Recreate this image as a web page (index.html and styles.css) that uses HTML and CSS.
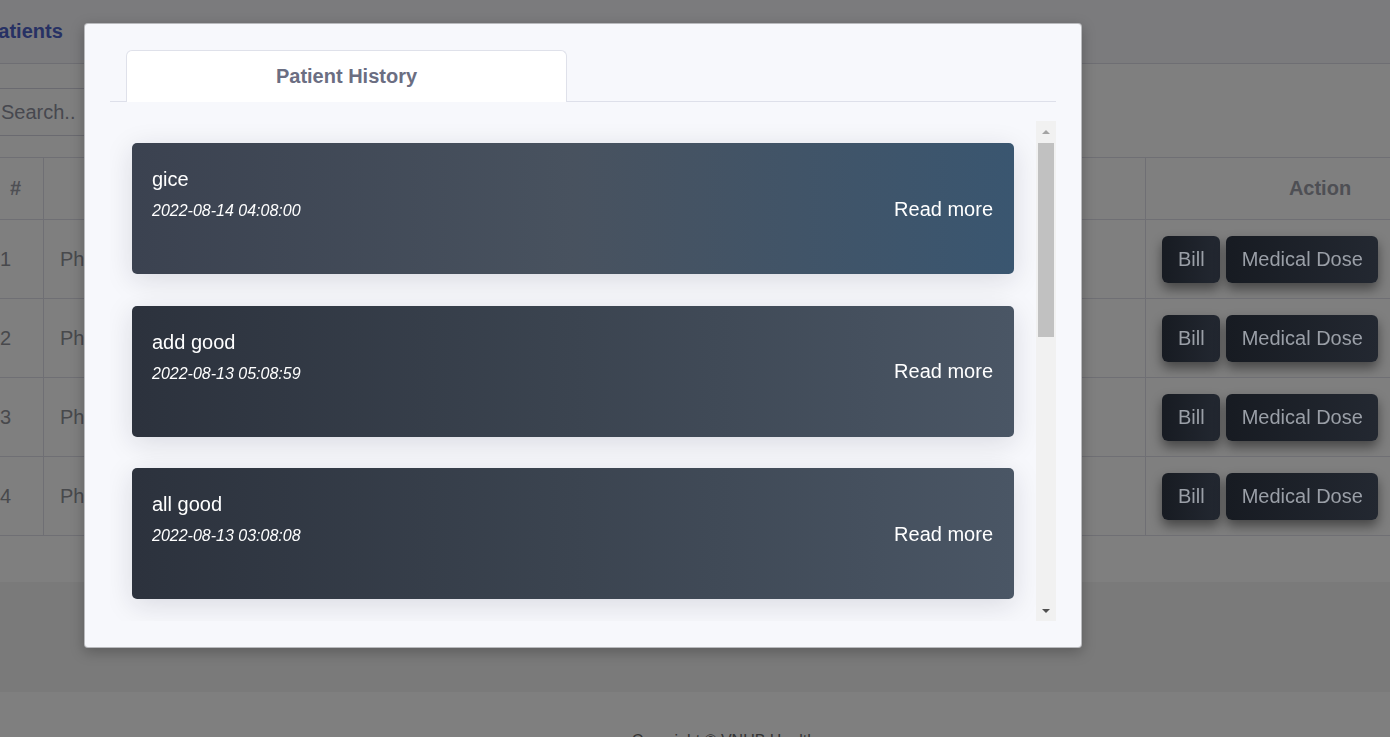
FILE: index.html
```html
<!DOCTYPE html>
<html lang="en">
<head>
<meta charset="utf-8">
<title>Patients</title>
<link rel="stylesheet" href="styles.css">
</head>
<body>
<div class="page">
  <header class="topbar"><h1 class="title">Patients</h1></header>
  <main class="content">
    <section class="panel">
      <div class="toolbar"><div class="search">Search..</div></div>
      <table class="grid">
        <thead>
          <tr><th class="c-num">#</th><th class="c-name">Name</th><th class="c-phone">Phone</th><th class="c-hist">History</th><th class="c-act">Action</th></tr>
        </thead>
        <tbody>
          <tr><td class="c-num">1</td><td>Pham Van A</td><td>0912345678</td><td class="c-hist"><span class="btn">History</span></td><td class="c-act"><span class="btn">Bill</span><span class="btn">Medical Dose</span></td></tr>
          <tr><td class="c-num">2</td><td>Pham Thi B</td><td>0987654321</td><td class="c-hist"><span class="btn">History</span></td><td class="c-act"><span class="btn">Bill</span><span class="btn">Medical Dose</span></td></tr>
          <tr><td class="c-num">3</td><td>Pham Van C</td><td>0901234567</td><td class="c-hist"><span class="btn">History</span></td><td class="c-act"><span class="btn">Bill</span><span class="btn">Medical Dose</span></td></tr>
          <tr><td class="c-num">4</td><td>Pham Thi D</td><td>0934567890</td><td class="c-hist"><span class="btn">History</span></td><td class="c-act"><span class="btn">Bill</span><span class="btn">Medical Dose</span></td></tr>
        </tbody>
      </table>
    </section>
  </main>
  <footer class="footer">Copyright © VNUB Healthcare</footer>
</div>

<div class="backdrop"></div>

<div class="modal">
  <nav class="tabs"><div class="tab">Patient History</div></nav>
  <div class="modal-body">
    <div class="list">
      <article class="entry entry-active">
        <div class="entry-text"><div class="entry-title">gice</div><div class="entry-date">2022-08-14 04:08:00</div></div>
        <div class="entry-more">Read more</div>
      </article>
      <article class="entry">
        <div class="entry-text"><div class="entry-title">add good</div><div class="entry-date">2022-08-13 05:08:59</div></div>
        <div class="entry-more">Read more</div>
      </article>
      <article class="entry">
        <div class="entry-text"><div class="entry-title">all good</div><div class="entry-date">2022-08-13 03:08:08</div></div>
        <div class="entry-more">Read more</div>
      </article>
    </div>
    <div class="scrollbar">
      <div class="sb-btn"><span class="arrow-up"></span></div>
      <div class="sb-track"><div class="sb-thumb"></div></div>
      <div class="sb-btn"><span class="arrow-down"></span></div>
    </div>
  </div>
</div>
</body>
</html>
```

FILE: styles.css
```css
html, body {
  margin: 0;
  padding: 0;
  overflow: hidden;
  height: 737px;
}
body {
  font-family: "Liberation Sans", Arial, sans-serif;
  color: #858796;
  background: #ffffff;
}
.page {
  width: 1503px;
  margin-left: -12px;
}
.topbar {
  height: 63px;
  background: #f6f6fa;
  border-bottom: 1px solid #dcdde6;
  display: flex;
  align-items: center;
}
.title {
  margin: 0 0 0 -3px;
  font-size: 20px;
  font-weight: bold;
  color: #4e63c8;
}
.content {
  background: #f4f4f5;
  padding-bottom: 110px;
}
.panel {
  background: #ffffff;
  padding-bottom: 46px;
}
.toolbar {
  padding: 24px 0 21px;
}
.search {
  width: 420px;
  height: 46px;
  border: 1px solid #d4d5e0;
  border-radius: 2px;
  box-sizing: content-box;
  padding-left: 12px;
  display: flex;
  align-items: center;
  font-size: 20px;
  color: #8e909e;
}
.grid {
  width: 1503px;
  border-collapse: collapse;
  table-layout: fixed;
  font-size: 20px;
}
.grid th, .grid td {
  border: 1px solid #dedfe8;
  border-left: none;
  border-right: 1px solid #dedfe8;
}
.grid th {
  height: 61px;
  font-weight: bold;
  color: #9c9ea9;
  text-align: center;
  padding: 0;
}
.grid td {
  height: 78px;
  padding: 0 16px;
  color: #909299;
  white-space: nowrap;
  overflow: hidden;
}
.grid .c-num { width: 55px; }
.grid td.c-num { padding-left: 12px; }
.grid .c-name { width: 500px; }
.grid .c-phone { width: 300px; }
.grid .c-hist { width: 299px; }
.grid td.c-hist { text-align: right; padding-right: 67px; }
.grid .c-act { width: 348px; }
.grid td.c-act { padding-left: 16px; }
.btn {
  position: relative;
  z-index: 11;
  display: inline-flex;
  align-items: center;
  height: 47px;
  padding: 0 15px 0 16px;
  margin-right: 6px;
  border-radius: 6px;
  background: linear-gradient(90deg, #171b22, #232831);
  color: #9a9fa7;
  font-size: 20px;
  box-shadow: 0 6px 12px rgba(0, 0, 0, 0.45);
  vertical-align: middle;
}
.footer {
  background: #ffffff;
  text-align: center;
  font-size: 16px;
  color: #6a6a6a;
  padding-top: 40px;
  height: 120px;
}
.backdrop {
  position: fixed;
  inset: 0;
  background: rgba(0, 0, 0, 0.5);
  z-index: 10;
}
.modal {
  position: fixed;
  top: 23px;
  left: 84px;
  width: 946px;
  padding: 26px 25px;
  background: #f7f8fc;
  border: 1px solid rgba(0, 0, 0, 0.25);
  border-radius: 4px;
  box-shadow: 0 4px 14px rgba(0, 0, 0, 0.25);
  z-index: 20;
}
.tabs {
  display: flex;
  padding-left: 16px;
  border-bottom: 1px solid #dee0ea;
}
.tab {
  width: 439px;
  height: 51px;
  margin-bottom: -1px;
  background: #ffffff;
  border: 1px solid #dfe1ea;
  border-bottom: none;
  border-radius: 6px 6px 0 0;
  display: flex;
  align-items: center;
  justify-content: center;
  font-size: 20px;
  font-weight: bold;
  color: #6b6e82;
}
.modal-body {
  display: flex;
  height: 500px;
  margin-top: 19px;
}
.list {
  flex: 1;
  overflow: hidden;
  padding: 22px;
}
.entry {
  height: 131px;
  margin-bottom: 31.5px;
  border-radius: 5px;
  padding: 0 21px 0 20px;
  display: flex;
  justify-content: space-between;
  align-items: center;
  color: #ffffff;
  background: linear-gradient(90deg, #2c323d 0%, #3b4450 50%, #4a5665 100%);
  box-shadow: 0 6px 28px rgba(20, 25, 45, 0.13);
}
.entry-active {
  background: linear-gradient(90deg, #3b4250 0%, #48525f 50%, #3a5670 100%);
}
.entry-text {
  align-self: flex-start;
  padding-top: 24px;
}
.entry-title {
  font-size: 20px;
  line-height: 24px;
  margin-bottom: 10px;
}
.entry-date {
  font-size: 16px;
  font-style: italic;
  line-height: 20px;
}
.entry-more {
  font-size: 20px;
  margin-top: 1px;
}
.scrollbar {
  width: 20px;
  display: flex;
  flex-direction: column;
  background: #f1f1f1;
}
.sb-btn {
  height: 21px;
  display: flex;
  align-items: center;
  justify-content: center;
}
.arrow-up {
  width: 0;
  height: 0;
  border-left: 4px solid transparent;
  border-right: 4px solid transparent;
  border-bottom: 4px solid #a3a3a3;
}
.arrow-down {
  width: 0;
  height: 0;
  border-left: 4px solid transparent;
  border-right: 4px solid transparent;
  border-top: 4px solid #505050;
}
.sb-track {
  flex: 1;
  padding: 1px 2px 0;
}
.sb-thumb {
  height: 194px;
  background: #c1c1c1;
}
```
